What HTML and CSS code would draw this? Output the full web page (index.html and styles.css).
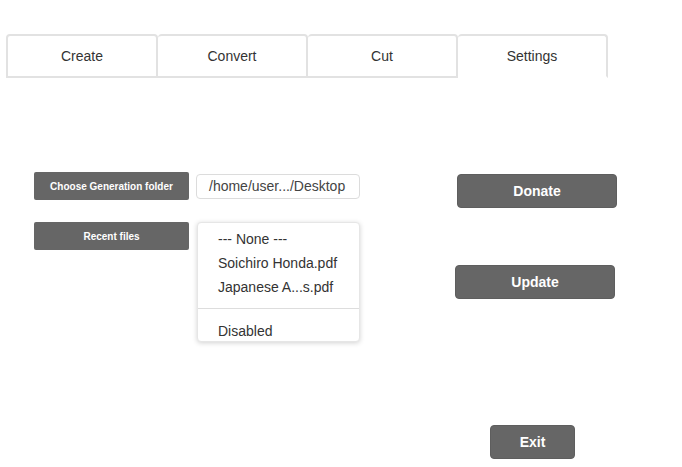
FILE: index.html
```html
<!DOCTYPE html>
<html>
<head>
<meta charset="utf-8">
<link rel="stylesheet" href="styles.css">
</head>
<body>
<div class="tabs">
  <div class="tab">Create</div>
  <div class="tab">Convert</div>
  <div class="tab">Cut</div>
  <div class="tab active">Settings</div>
</div>
<div class="content">
  <div class="left">
    <div class="row">
      <div class="btn small">Choose Generation folder</div>
      <div class="input">/home/user.../Desktop</div>
    </div>
    <div class="row row2">
      <div class="btn small">Recent files</div>
      <div class="select-wrap">
        <div class="menu">
          <div class="item">--- None ---</div>
          <div class="item">Soichiro Honda.pdf</div>
          <div class="item">Japanese A...s.pdf</div>
          <div class="sep"></div>
          <div class="item">Disabled</div>
        </div>
      </div>
    </div>
  </div>
  <div class="right">
    <div class="btn big donate">Donate</div>
    <div class="btn big update">Update</div>
    <div class="btn big exit">Exit</div>
  </div>
</div>
</body>
</html>
```
FILE: styles.css
```css
html, body {
  margin: 0;
  padding: 0;
  background: #fff;
  font-family: "Liberation Sans", Arial, sans-serif;
  color: #333;
}
.tabs {
  display: flex;
  margin: 34px 0 0 6px;
}
.tab {
  width: 148px;
  height: 40px;
  border: 2px solid #e2e2e2;
  border-left-width: 0;
  border-radius: 4px 4px 0 0;
  display: flex;
  align-items: center;
  justify-content: center;
  font-size: 14px;
  color: #333;
}
.tab:first-child {
  border-left-width: 2px;
}
.tab.active {
  border-bottom-color: transparent;
}
.content {
  display: flex;
  padding-top: 94px;
}
.left {
  margin-left: 34px;
  width: 326px;
}
.row {
  display: flex;
  align-items: flex-start;
  gap: 7px;
}
.row2 {
  margin-top: 22px;
}
.btn {
  background: #666;
  color: #fff;
  font-weight: bold;
  display: flex;
  align-items: center;
  justify-content: center;
  box-sizing: border-box;
}
.btn.small {
  width: 155px;
  height: 28px;
  font-size: 10px;
  border-radius: 2px;
}
.input {
  margin-top: 2px;
  width: 164px;
  height: 25px;
  box-sizing: border-box;
  border: 1px solid #dcdcdc;
  border-radius: 4px;
  padding-left: 12px;
  font-size: 14px;
  line-height: 23px;
  color: #444;
}
.select-wrap {
  position: relative;
  width: 164px;
}
.menu {
  position: absolute;
  left: 1px;
  top: 0;
  width: 163px;
  box-sizing: border-box;
  background: #fff;
  border: 1px solid #e6e6e6;
  border-radius: 4px;
  box-shadow: 0 1px 5px rgba(0,0,0,0.18);
  padding: 4px 0 0;
  height: 120px;
}
.item {
  font-size: 14px;
  line-height: 24px;
  padding-left: 20px;
  color: #333;
}
.sep {
  height: 1px;
  background: #ddd;
  margin: 9px 0 10px;
}
.right {
  margin-left: 95px;
  display: flex;
  flex-direction: column;
  align-items: flex-start;
}
.btn.big {
  height: 34px;
  font-size: 14px;
  border-radius: 4px;
  border: 1px solid #5e5e5e;
}
.donate {
  margin-top: 2px;
  margin-left: 2px;
  width: 160px;
}
.update {
  margin-top: 57px;
  width: 160px;
}
.exit {
  margin-top: 126px;
  margin-left: 35px;
  width: 85px;
}
```
